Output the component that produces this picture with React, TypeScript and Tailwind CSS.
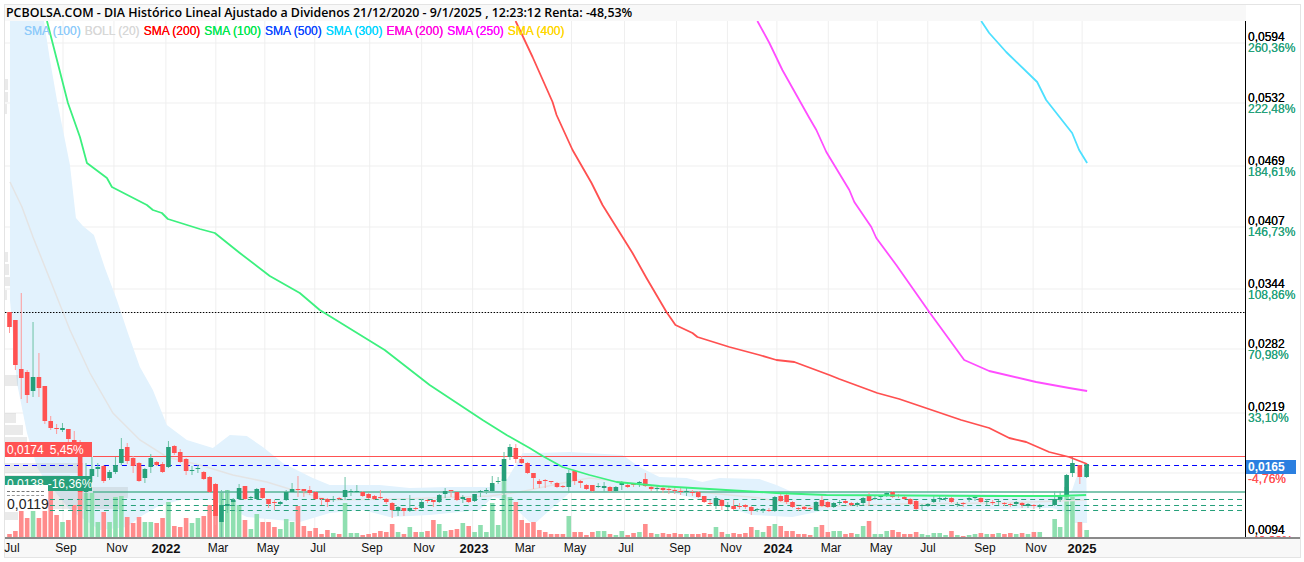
// candles: [up, top, bottom, high, low, volume] in chart pixels
type Candle = [number, number, number, number, number, number];

const candles: Candle[] = [
  [0, 312, 327, 312, 333, 3], [0, 320, 365, 320, 370, 6], [0, 369, 378, 293, 399, 27], [0, 372, 395, 370, 403, 19],
  [1, 377, 391, 322, 397, 27], [0, 377, 388, 353, 397, 19], [0, 386, 421, 386, 424, 37], [0, 421, 428, 416, 430, 54],
  [0, 428, 429, 424, 434, 22], [1, 428, 430, 423, 432, 15], [0, 429, 439, 429, 442, 17], [0, 440, 446, 431, 448, 32],
  [0, 446, 492, 440, 500, 74], [1, 490, 492, 463, 510, 44], [1, 469, 476, 457, 482, 44], [1, 467, 469, 463, 477, 15],
  [0, 466, 481, 465, 483, 25], [1, 472, 478, 470, 480, 15], [1, 465, 472, 457, 474, 40], [1, 449, 463, 438, 465, 41],
  [0, 447, 461, 443, 464, 20], [0, 458, 466, 456, 473, 14], [0, 463, 481, 462, 482, 20], [1, 469, 478, 468, 483, 15],
  [1, 458, 467, 454, 473, 15], [0, 462, 465, 461, 466, 14], [0, 464, 472, 462, 473, 19], [1, 447, 467, 441, 468, 35],
  [0, 446, 453, 445, 455, 11], [0, 452, 462, 449, 463, 10], [0, 459, 471, 458, 475, 19], [1, 470, 471, 466, 475, 14],
  [1, 468, 469, 465, 473, 19], [0, 472, 479, 471, 480, 21], [0, 477, 492, 476, 493, 32], [0, 484, 516, 483, 525, 53],
  [1, 505, 522, 490, 537, 45], [1, 504, 506, 490, 513, 47], [1, 500, 502, 498, 505, 36], [1, 488, 499, 484, 500, 32],
  [0, 486, 499, 486, 500, 17], [1, 497, 498, 496, 499, 8], [1, 489, 499, 488, 500, 23], [0, 488, 498, 488, 499, 15],
  [0, 499, 504, 499, 508, 15], [0, 502, 503, 500, 510, 10], [1, 502, 504, 501, 506, 8], [1, 492, 500, 490, 501, 18],
  [1, 489, 492, 483, 492, 15], [0, 489, 490, 476, 497, 31], [0, 489, 491, 489, 497, 11], [0, 490, 493, 486, 495, 6],
  [0, 492, 499, 491, 500, 9], [0, 498, 499, 498, 505, 3], [0, 499, 502, 498, 507, 7], [1, 499, 500, 496, 502, 4],
  [0, 498, 499, 497, 500, 3], [1, 490, 497, 477, 500, 34], [1, 491, 492, 489, 496, 4], [1, 491, 492, 485, 493, 4],
  [0, 492, 496, 491, 497, 2], [0, 494, 498, 493, 499, 3], [0, 496, 499, 495, 500, 4], [0, 497, 498, 490, 499, 6],
  [0, 499, 502, 498, 504, 5], [0, 503, 510, 502, 518, 13], [1, 507, 511, 506, 516, 5], [0, 508, 511, 508, 516, 3],
  [1, 508, 511, 495, 512, 10], [0, 508, 509, 507, 511, 5], [1, 502, 508, 499, 509, 5], [0, 500, 501, 499, 503, 6],
  [0, 500, 502, 500, 507, 17], [1, 495, 502, 494, 503, 13], [1, 491, 494, 488, 498, 6], [0, 490, 491, 490, 497, 7],
  [0, 492, 500, 492, 501, 8], [1, 497, 499, 495, 503, 14], [0, 498, 502, 498, 503, 11], [1, 494, 501, 494, 502, 5],
  [1, 491, 492, 490, 497, 12], [1, 490, 491, 488, 494, 5], [1, 483, 491, 476, 492, 34], [1, 481, 482, 477, 484, 12],
  [1, 459, 481, 452, 498, 58], [1, 447, 457, 444, 460, 40], [0, 448, 459, 444, 463, 35], [0, 459, 463, 456, 464, 17],
  [0, 463, 473, 462, 474, 14], [0, 473, 478, 473, 489, 15], [0, 481, 484, 479, 488, 7], [0, 480, 481, 479, 488, 5],
  [0, 481, 482, 481, 484, 3], [0, 483, 487, 482, 488, 3], [0, 486, 487, 485, 488, 3], [1, 473, 487, 470, 493, 21],
  [0, 471, 481, 470, 485, 5], [0, 481, 483, 480, 488, 5], [0, 485, 489, 484, 490, 2], [0, 485, 491, 485, 492, 5],
  [1, 486, 487, 483, 488, 6], [1, 486, 488, 482, 492, 6], [0, 487, 491, 486, 492, 3], [1, 487, 491, 486, 492, 2],
  [1, 483, 485, 481, 490, 6], [0, 485, 487, 484, 488, 2], [0, 484, 485, 483, 487, 4], [1, 482, 483, 481, 487, 5],
  [0, 479, 486, 473, 487, 13], [0, 487, 489, 486, 491, 4], [1, 488, 489, 486, 492, 3], [0, 488, 490, 486, 493, 4],
  [0, 489, 490, 487, 494, 3], [0, 490, 491, 486, 494, 4], [0, 491, 492, 488, 495, 3], [1, 491, 492, 488, 496, 3],
  [0, 492, 493, 490, 496, 3], [0, 492, 497, 491, 498, 3], [0, 496, 502, 496, 503, 4], [0, 503, 504, 500, 506, 3],
  [1, 498, 506, 496, 509, 10], [0, 500, 506, 499, 510, 5], [1, 505, 507, 502, 510, 3], [0, 506, 509, 500, 510, 4],
  [0, 506, 507, 503, 509, 3], [0, 505, 507, 504, 509, 4], [0, 507, 511, 506, 515, 10], [1, 509, 510, 508, 512, 7],
  [1, 509, 510, 508, 513, 5], [0, 510, 511, 508, 512, 11], [1, 497, 511, 496, 512, 13], [0, 496, 501, 492, 502, 11],
  [0, 495, 502, 494, 504, 6], [0, 502, 507, 501, 508, 6], [0, 508, 509, 507, 511, 3], [0, 507, 509, 506, 510, 3],
  [0, 508, 509, 507, 510, 2], [1, 502, 510, 501, 511, 10], [0, 500, 506, 495, 507, 12], [0, 502, 507, 501, 508, 5],
  [1, 503, 507, 502, 508, 6], [1, 502, 503, 500, 505, 6], [0, 501, 503, 500, 504, 3], [0, 503, 505, 502, 506, 4],
  [1, 503, 505, 502, 507, 3], [1, 498, 503, 497, 505, 11], [0, 496, 501, 492, 506, 16], [1, 498, 499, 496, 500, 3],
  [1, 496, 497, 495, 500, 3], [1, 493, 495, 492, 497, 6], [0, 492, 497, 491, 498, 7], [0, 495, 496, 494, 498, 5],
  [0, 497, 499, 496, 500, 3], [0, 499, 504, 498, 505, 3], [0, 501, 509, 500, 510, 5], [1, 505, 506, 504, 510, 3],
  [1, 504, 506, 503, 507, 2], [1, 499, 502, 496, 503, 4], [1, 498, 499, 496, 502, 4], [1, 498, 499, 497, 501, 2],
  [0, 498, 502, 497, 503, 6], [1, 504, 505, 502, 507, 2], [0, 503, 504, 502, 507, 1], [1, 498, 499, 497, 502, 2],
  [1, 497, 498, 496, 501, 3], [0, 498, 502, 497, 503, 4], [1, 501, 502, 499, 505, 3], [0, 502, 503, 500, 505, 3],
  [1, 501, 502, 500, 505, 4], [0, 503, 504, 502, 506, 3], [0, 504, 505, 503, 507, 4], [1, 502, 504, 501, 506, 3],
  [0, 503, 505, 502, 508, 4], [1, 504, 506, 503, 508, 3], [0, 505, 506, 504, 509, 5], [1, 505, 507, 504, 509, 5],
  [1, 499, 505, 491, 506, 18], [1, 497, 499, 491, 502, 10], [1, 475, 496, 474, 497, 50], [1, 463, 473, 457, 477, 40],
  [0, 465, 477, 465, 484, 15], [1, 464, 477, 463, 478, 7],
];

const tailX = [1055.5, 1061, 1067.5, 1073.3, 1080.7, 1087.5];
const candleX = (i: number) => {
  const start = candles.length - tailX.length;
  return i >= start ? tailX[i - start] : 9.5 + 5.892 * i;
};

const gridX = [63, 114, 166, 216, 265, 315, 370, 422, 473, 523.5, 572, 625, 677, 728, 777.5, 829, 878, 928.5, 982, 1034, 1083];
const gridY = [43, 103, 166, 227, 289, 349, 413, 473];

const toPoints = (pts: number[][]) => pts.map((p) => p.join(',')).join(' ');

const bandUpper = [
  [10, 21], [44, 21], [50, 60], [57, 100], [63, 130], [70, 165], [76, 218], [83, 226], [94, 235], [105, 268],
  [117, 300], [128, 333], [140, 367], [153, 390], [167, 425], [187, 440], [213, 448], [230, 435], [247, 436],
  [263, 447], [283, 463], [313, 478], [330, 485], [380, 485], [410, 488], [447, 487], [490, 487], [507, 480],
  [523, 453], [537, 453], [570, 452], [623, 455], [640, 467], [660, 477], [687, 478], [703, 482], [720, 478],
  [760, 479], [777, 485], [793, 492], [990, 494], [1060, 497], [1073, 490], [1077, 478], [1087, 465],
];
const bandLower = [
  [1088, 523], [1073, 523], [1070, 513], [1053, 508], [990, 509], [917, 510], [827, 510], [793, 517], [753, 515],
  [703, 500], [660, 490], [623, 492], [570, 493], [547, 513], [537, 522], [530, 522], [507, 500], [493, 497],
  [480, 510], [430, 515], [390, 517], [363, 510], [330, 513], [300, 522], [247, 517], [213, 500], [180, 500],
  [157, 507], [140, 517], [127, 527], [100, 530], [70, 510], [43, 477], [37, 467], [27, 433], [17, 383], [10, 300],
];
const bollMid = [
  [10, 182], [22, 207], [33, 237], [53, 287], [70, 330], [90, 373], [113, 413], [140, 440], [167, 457], [200, 465],
  [233, 475], [267, 482], [293, 490], [330, 500], [400, 499], [490, 496], [520, 492], [563, 483], [590, 478],
  [630, 483], [660, 488], [760, 498], [810, 507], [900, 504], [1000, 503], [1087, 500],
];
const sma100 = [
  [47, 21], [57, 60], [68, 103], [80, 137], [87, 163], [107, 178], [112, 187], [147, 205], [153, 210], [162, 213],
  [168, 219], [200, 229], [215, 233], [240, 253], [270, 276], [300, 293], [320, 310], [385, 350], [430, 385],
  [483, 420], [507, 435], [530, 448], [543, 456], [563, 467], [590, 475], [617, 482], [660, 486], [693, 488],
  [760, 492], [777, 493], [827, 495], [990, 496], [1060, 496], [1087, 495],
];
const sma200 = [
  [516, 21], [533, 57], [553, 102], [557, 115], [573, 150], [592, 183], [603, 205], [633, 253], [647, 278], [667, 312],
  [676, 325], [693, 333], [698, 337], [730, 347], [760, 355], [777, 360], [795, 362], [830, 375], [840, 379], [878, 393],
  [900, 399], [962, 420], [990, 428], [1010, 438], [1027, 442], [1050, 452], [1070, 457], [1088, 464],
];
const sma250 = [
  [758, 21], [770, 43], [783, 70], [810, 118], [817, 130], [827, 152], [850, 190], [855, 202], [872, 227], [877, 238],
  [897, 265], [930, 312], [965, 360], [990, 371], [1037, 382], [1070, 388], [1088, 391],
];
const sma300 = [[982, 21], [990, 33], [1007, 52], [1038, 82], [1047, 100], [1073, 133], [1080, 150], [1088, 163]];

// gray volume profile at the left edge: [top, height, width]
const profile = [
  [79, 11, 3], [92, 10, 3], [104, 10, 2], [252, 10, 3], [264, 11, 4], [277, 9, 5], [290, 10, 2], [375, 11, 13], [413, 10, 11],
  [425, 10, 18], [437, 11, 22], [463, 10, 73], [475, 10, 65], [487, 11, 123], [498, 11, 115], [512, 8, 13],
];

const legend = [
  ['SMA (100)', 'text-[#8fcbfa]'],
  ['BOLL (20)', 'text-[#d8d8d8]'],
  ['SMA (200)', 'text-[#ff0000]'],
  ['SMA (100)', 'text-[#00e64d]'],
  ['SMA (500)', 'text-[#0d47ff]'],
  ['SMA (300)', 'text-[#00d5ff]'],
  ['EMA (200)', 'text-[#ff00dd]'],
  ['SMA (250)', 'text-[#ff00ff]'],
  ['SMA (400)', 'text-[#ffd600]'],
];

const priceLabels = [
  { y: 37, t: '0,0594', c: 'text-black' }, { y: 47.5, t: '260,36%', c: 'text-[#26a07a]' },
  { y: 97.5, t: '0,0532', c: 'text-black' }, { y: 109, t: '222,48%', c: 'text-[#26a07a]' },
  { y: 160.5, t: '0,0469', c: 'text-black' }, { y: 172, t: '184,61%', c: 'text-[#26a07a]' },
  { y: 220.5, t: '0,0407', c: 'text-black' }, { y: 232, t: '146,73%', c: 'text-[#26a07a]' },
  { y: 283.5, t: '0,0344', c: 'text-black' }, { y: 295, t: '108,86%', c: 'text-[#26a07a]' },
  { y: 343.5, t: '0,0282', c: 'text-black' }, { y: 354.5, t: '70,98%', c: 'text-[#26a07a]' },
  { y: 406.5, t: '0,0219', c: 'text-black' }, { y: 418, t: '33,10%', c: 'text-[#26a07a]' },
  { y: 479, t: '-4,76%', c: 'text-[#ff5252]' },
  { y: 529.5, t: '0,0094', c: 'text-black' }, { y: 541, t: '-42,92%', c: 'text-[#ff5252]' },
];

const timeLabels: [string, number, boolean][] = [
  ['Jul', 12, false], ['Sep', 66, false], ['Nov', 117, false], ['2022', 166, true], ['Mar', 218, false], ['May', 268, false],
  ['Jul', 318, false], ['Sep', 372, false], ['Nov', 424, false], ['2023', 474, true], ['Mar', 525, false], ['May', 575, false],
  ['Jul', 626, false], ['Sep', 680, false], ['Nov', 731, false], ['2024', 778, true], ['Mar', 831, false], ['May', 881, false],
  ['Jul', 928, false], ['Sep', 985, false], ['Nov', 1036, false], ['2025', 1082, true],
];

function ChartDrawing() {
  return (
    <svg viewBox="5 21 1241 516" className="block h-full w-full" preserveAspectRatio="none">
      {gridX.map((x) => (
        <line key={x} x1={x} x2={x} y1={21} y2={537} stroke="#efefef" strokeWidth={1} />
      ))}
      {gridY.map((y) => (
        <line key={y} x1={5} x2={1246} y1={y} y2={y} stroke="#efefef" strokeWidth={1} />
      ))}
      <polygon points={toPoints([...bandUpper, ...bandLower])} fill="#e2f2fd" />
      {profile.map(([y, h, w]) => (
        <rect key={y} x={5} y={y} width={w} height={h} fill="#9e9e9e" opacity={0.22} />
      ))}
      {candles.map((c, i) => (
        <rect
          key={i}
          x={candleX(i) - 2.3}
          y={537 - c[5]}
          width={4.6}
          height={c[5]}
          fill={c[0] ? '#8fdfb0' : '#ff8c8c'}
        />
      ))}
      <polyline points={toPoints(bollMid)} fill="none" stroke="#e4e4e4" strokeWidth={1.5} />
      <line x1={5} x2={1246} y1={312.5} y2={312.5} stroke="#000" strokeWidth={1} strokeDasharray="1.5 1.5" />
      <line x1={93} x2={1246} y1={456.5} y2={456.5} stroke="#ff5252" strokeWidth={1.2} />
      <line x1={5} x2={1246} y1={465.5} y2={465.5} stroke="#0000ff" strokeWidth={1.2} strokeDasharray="5 4" />
      <line x1={93} x2={1246} y1={492} y2={492} stroke="#56b596" strokeWidth={1.4} />
      {[499.5, 505.5, 510.5].map((y) => (
        <line key={y} x1={50} x2={1246} y1={y} y2={y} stroke="#26a07a" strokeWidth={1.1} strokeDasharray="5 4" />
      ))}
      {candles.map((c, i) => {
        const x = candleX(i);
        return (
          <g key={i}>
            <line x1={x} x2={x} y1={c[3]} y2={c[4]} stroke={c[0] ? '#6bc2a4' : '#ff9a9a'} strokeWidth={1} />
            <rect x={x - 2.3} y={c[1]} width={4.6} height={c[2] - c[1]} fill={c[0] ? '#26a07a' : '#ff5252'} />
          </g>
        );
      })}
      <g fill="none" strokeWidth={1.8} strokeLinejoin="round">
        <polyline points={toPoints(sma100)} stroke="#3cf07e" />
        <polyline points={toPoints(sma200)} stroke="#ff5050" />
        <polyline points={toPoints(sma250)} stroke="#ff4dff" />
        <polyline points={toPoints(sma300)} stroke="#4de0ff" />
      </g>
    </svg>
  );
}

export default function App() {
  return (
    <div className="h-[562px] w-[1304px] overflow-hidden bg-white pl-[4px] pr-[3px] pt-[4px] font-['Liberation_Sans',sans-serif]">
      <div className="flex h-[554px] flex-col border-x border-y border-[#e4e4e4]">
        <div className="flex h-[16px] shrink-0">
          <div className="flex w-[1241px] items-center whitespace-nowrap bg-[#f8f8f8] pl-[1px] font-['Open_Sans',sans-serif] text-[12.4px] font-semibold leading-none text-black">
            PCBOLSA.COM - DIA Histórico Lineal Ajustado a Dividenos 21/12/2020 - 9/1/2025 , 12:23:12 Renta: -48,53%
          </div>
        </div>

        <div className="flex h-[516px] shrink-0">
          <div className="relative w-[1241px] shrink-0 border-r border-black">
            <ChartDrawing />
            <div className="absolute left-[19px] top-[3px] flex gap-[4px] text-[12px] leading-[14px] [text-shadow:0_0_0.6px_currentColor]">
              {legend.map(([label, color], i) => (
                <span key={i} className={color}>
                  {label}
                </span>
              ))}
            </div>
            <div className="absolute left-0 top-[421px] flex h-[15px] w-[87px] items-center gap-[6px] bg-[#ff5252] pl-[2px] text-[12px] text-white">
              <span>0,0174</span>
              <span>5,45%</span>
            </div>
            <div className="absolute left-0 top-[455px] flex h-[15px] w-[87px] items-center gap-[4px] bg-[#26a07a] pl-[2px] text-[12px] text-white">
              <span>0,0138</span>
              <span>-16,36%</span>
            </div>
            <div className="absolute left-0 top-[464px] flex h-[26px] w-[43px] flex-col justify-end bg-white pl-[2px] text-[14px] leading-[14px] text-[#222222]">
              <div className="mb-[3px] mr-[4px] border-t border-dashed border-[#777777]" />
              <div className="mb-[1px] mr-[4px] border-t border-dashed border-[#999999]" />
              <span>0,0119</span>
            </div>
          </div>

          <div className="relative min-w-0 flex-1 overflow-visible">
            {priceLabels.map((l) => (
              <div
                key={l.t}
                className={`absolute left-[2px] -translate-y-1/2 text-[12px] leading-[10px] [text-shadow:0_0_0.4px_currentColor] ${l.c}`}
                style={{ top: l.y - 21 }}
              >
                {l.t}
              </div>
            ))}
            <div className="absolute left-0 top-[439px] flex h-[14px] w-[50px] items-center bg-[#2b7fe0] pl-[2px] text-[12px] font-bold leading-none text-white">
              0,0165
            </div>
          </div>
        </div>

        <div className="relative z-10 min-h-0 flex-1 border-t-2 border-[#8a8a8a] bg-[#f8f8f8]">
          {timeLabels.map(([t, x, year]) => (
            <span
              key={t + x}
              className={`absolute top-1/2 -translate-x-1/2 -translate-y-1/2 leading-none text-[#111111] ${
                year ? 'text-[13px] font-bold' : 'text-[12px]'
              }`}
              style={{ left: x - 5 }}
            >
              {t}
            </span>
          ))}
        </div>
      </div>
    </div>
  );
}
